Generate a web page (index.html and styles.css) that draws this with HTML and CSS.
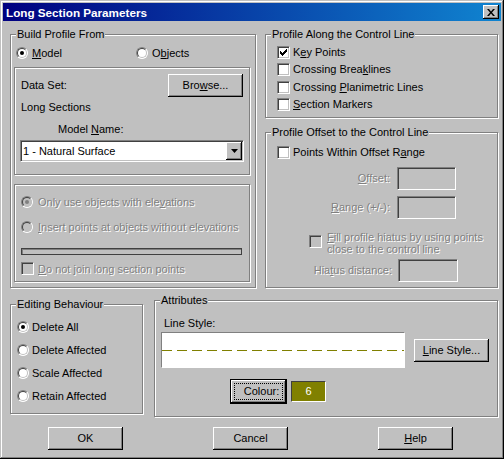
FILE: index.html
```html
<!DOCTYPE html>
<html>
<head>
<meta charset="utf-8">
<link rel="stylesheet" href="styles.css">
</head>
<body>
<div class="window">
  <div class="titlebar">
    <span class="title">Long Section Parameters</span>
    <span class="close"><svg width="8" height="7" viewBox="0 0 8 7"><path d="M0 0h2l2 2.5 2-2.5h2l-3 3.5 3 3.5h-2l-2-2.5-2 2.5h-2l3-3.5z" fill="#000"/></svg></span>
  </div>
  <div class="content">
    <div class="row-top">
      <div class="group g-build">
        <span class="caption">Build Profile From</span>
        <div class="radio-line">
          <div class="opt w-model"><span class="radio on"></span><span><u>M</u>odel</span></div>
          <div class="opt"><span class="radio"></span><span>O<u>b</u>jects</span></div>
        </div>
        <div class="box box-data">
          <div class="ds-row"><span>Data Set:</span><span class="btn">Bro<u>w</u>se...</span></div>
          <div class="ls">Long Sections</div>
          <div class="mn">Model <u>N</u>ame:</div>
          <div class="combo"><span class="combo-text">1 - Natural Surface</span><span class="drop"><svg width="7" height="4" viewBox="0 0 7 4"><path d="M0 0h7l-3.5 4z" fill="#000"/></svg></span></div>
        </div>
        <div class="box box-opts">
          <div class="dis-line r1"><span class="radio dis on"></span><span class="dis">Only use objects with ele<u>v</u>ations</span></div>
          <div class="dis-line r2"><span class="radio dis"></span><span class="dis"><u>I</u>nsert points at objects without elevations</span></div>
          <div class="bar"></div>
          <div class="dis-line r3"><span class="check dis"></span><span class="dis"><u>D</u>o not join long section points</span></div>
        </div>
      </div>
      <div class="col-right">
        <div class="group g-along">
          <span class="caption">Profile Along the Control Line</span>
          <div class="ck-list">
            <div class="ck-line"><span class="check"><svg width="11" height="11" viewBox="0 0 11 11" shape-rendering="crispEdges"><path d="M2 4h1v3h-1zM3 5h1v3h-1zM4 6h1v3h-1zM5 5h1v3h-1zM6 4h1v3h-1zM7 3h1v3h-1zM8 2h1v3h-1z" fill="#000"/></svg></span><span>K<u>e</u>y Points</span></div>
            <div class="ck-line"><span class="check"></span><span>Crossing Brea<u>k</u>lines</span></div>
            <div class="ck-line shift"><span class="check"></span><span>Crossing <u>P</u>lanimetric Lines</span></div>
            <div class="ck-line"><span class="check"></span><span><u>S</u>ection Markers</span></div>
          </div>
        </div>
        <div class="group g-offset">
          <span class="caption">Profile Offset to the Control Line</span>
          <div class="ck-line pw"><span class="check"></span><span>Points Within Offset R<u>a</u>nge</span></div>
          <div class="field-row fr-offset"><span class="dis"><u>O</u>ffset:</span><span class="field"></span></div>
          <div class="field-row fr-range"><span class="dis"><u>R</u>ange (+/-):</span><span class="field"></span></div>
          <div class="fill-row"><span class="check dis"></span><span class="dis fill-text"><u>F</u>ill profile hiatus by using points<br>close to the control line</span></div>
          <div class="field-row fr-hiatus"><span class="dis">Hia<u>t</u>us distance:</span><span class="field wide"></span></div>
        </div>
      </div>
    </div>
    <div class="row-bottom">
      <div class="group g-edit">
        <span class="caption">Editing Behaviour</span>
        <div class="edit-list">
          <div class="opt e"><span class="radio on"></span><span>Delete All</span></div>
          <div class="opt e"><span class="radio"></span><span>Delete Affected</span></div>
          <div class="opt e"><span class="radio"></span><span>Scale Affected</span></div>
          <div class="opt e"><span class="radio"></span><span>Retain Affected</span></div>
        </div>
      </div>
      <div class="group g-attr">
        <span class="caption">Attributes</span>
        <div class="ls-label">Line Style:</div>
        <div class="line-row">
          <div class="line-box"><svg width="242" height="1" viewBox="0 0 242 1" shape-rendering="crispEdges"><line x1="0" y1="0.5" x2="242" y2="0.5" stroke="#808000" stroke-width="1" stroke-dasharray="10 5"/></svg></div>
          <span class="btn"><u>L</u>ine Style...</span>
        </div>
        <div class="colour-row">
          <span class="btn btn-default">Colour:</span>
          <span class="swatch">6</span>
        </div>
      </div>
    </div>
    <div class="buttons">
      <span class="btn">OK</span>
      <span class="btn">Cancel</span>
      <span class="btn"><u>H</u>elp</span>
    </div>
  </div>
</div>
</body>
</html>
```
FILE: styles.css
```css
html, body {
  margin: 0;
  background: #c0c0c0;
}
body {
  font: 11px/13px "Liberation Sans", Arial, sans-serif;
  color: #000;
}
u { text-underline-offset: 1px; }

.window {
  width: 504px;
  height: 459px;
  box-sizing: border-box;
  padding: 3px;
  background: #c0c0c0;
  box-shadow: inset -1px -1px #000, inset 1px 1px #c0c0c0, inset -2px -2px #808080, inset 2px 2px #fff;
}

.titlebar {
  height: 18px;
  background: linear-gradient(to right, #000080, #1084d0);
  display: flex;
  align-items: center;
  justify-content: space-between;
  padding: 0 2px 0 3px;
}
.title {
  color: #fff;
  font-weight: bold;
  font-size: 11.7px;
}
.close {
  width: 16px;
  height: 14px;
  box-sizing: border-box;
  background: #c0c0c0;
  box-shadow: inset -1px -1px #000, inset 1px 1px #fff, inset -2px -2px #808080;
  display: flex;
  align-items: center;
  justify-content: center;
}
.close svg { display: block; }

.content {
  padding: 13px 0 0 7px;
}

/* group boxes */
.group, .box {
  position: relative;
  box-sizing: border-box;
  border: 1px solid #808080;
  box-shadow: inset 1px 1px #fff, 1px 1px #fff;
}
.caption {
  position: absolute;
  top: -7px;
  left: 5px;
  padding: 0 1px;
  background: #c0c0c0;
  line-height: 13px;
  white-space: nowrap;
}

.row-top {
  display: flex;
  gap: 9px;
  align-items: flex-start;
}
.g-build {
  width: 246px;
  height: 254px;
  padding-left: 3px;
}
.col-right {
  display: flex;
  flex-direction: column;
  gap: 14px;
  width: 233px;
}
.g-along { height: 84px; }
.g-offset { height: 156px; }

.row-bottom {
  display: flex;
  gap: 11px;
  margin-top: 12px;
  align-items: flex-start;
}
.g-edit {
  width: 133px;
  height: 110px;
  margin-top: 4px;
}
.g-attr {
  width: 344px;
  height: 117px;
}

.buttons {
  display: flex;
  gap: 90px;
  margin-top: 10px;
  padding-left: 38px;
}

/* controls */
.btn {
  position: relative;
  flex: none;
  width: 75px;
  height: 23px;
  box-sizing: border-box;
  background: #c0c0c0;
  box-shadow: inset -1px -1px #000, inset 1px 1px #fff, inset -2px -2px #808080;
  display: flex;
  align-items: center;
  justify-content: center;
  white-space: nowrap;
}
.btn-default {
  width: 57px;
  height: 25px;
  border: 1px solid #000;
  padding-left: 6px;
}
.btn-default::after {
  content: "";
  position: absolute;
  left: 3px;
  top: 3px;
  right: 3px;
  bottom: 3px;
  border: 1px dotted #000;
}

.radio {
  position: relative;
  flex: none;
  width: 12px;
  height: 12px;
  box-sizing: border-box;
  border-radius: 50%;
  border: 1px solid;
  border-color: #808080 #fff #fff #808080;
  background: #fff;
}
.radio::before {
  content: "";
  position: absolute;
  inset: 0;
  border-radius: 50%;
  border: 1px solid;
  border-color: #404040 #c0c0c0 #c0c0c0 #404040;
}
.radio.on::after {
  content: "";
  position: absolute;
  left: 3px;
  top: 3px;
  width: 4px;
  height: 4px;
  border-radius: 50%;
  background: #000;
}
.radio.dis { background: #c0c0c0; }
.radio.dis.on::after { background: #808080; }

.check {
  position: relative;
  flex: none;
  width: 13px;
  height: 13px;
  box-sizing: border-box;
  border: 1px solid;
  border-color: #808080 #fff #fff #808080;
  box-shadow: inset 1px 1px #404040, inset -1px -1px #c0c0c0;
  background: #fff;
}
.check svg { display: block; }
.check.dis { background: #c0c0c0; }

.dis {
  color: #808080;
  text-shadow: 1px 1px 0 #fff;
}

.field {
  flex: none;
  width: 59px;
  height: 23px;
  box-sizing: border-box;
  border: 1px solid;
  border-color: #808080 #fff #fff #808080;
  box-shadow: inset 1px 1px #404040;
  background: #c0c0c0;
}
.field.wide { width: 60px; }

/* build profile group */
.radio-line {
  display: flex;
  align-items: center;
  height: 12px;
  margin-top: 12px;
  padding-left: 2px;
}
.opt {
  display: flex;
  align-items: center;
  gap: 4px;
  white-space: nowrap;
}
.w-model { width: 120px; }

.box-data {
  width: 236px;
  height: 108px;
  margin-top: 8px;
}
.ds-row {
  display: flex;
  justify-content: space-between;
  align-items: center;
  margin: 6px 6px 0 6px;
}
.ls { margin: 4px 0 0 6px; }
.mn { margin: 9px 0 0 43px; }
.combo {
  width: 224px;
  height: 22px;
  margin: 4px 0 0 5px;
  box-sizing: border-box;
  border: 1px solid;
  border-color: #808080 #fff #fff #808080;
  box-shadow: inset 1px 1px #404040, inset -1px -1px #c0c0c0;
  background: #fff;
  padding: 1px;
  display: flex;
  align-items: center;
  justify-content: space-between;
}
.combo-text { padding-left: 1px; }
.drop {
  width: 16px;
  height: 18px;
  box-sizing: border-box;
  background: #c0c0c0;
  box-shadow: inset -1px -1px #000, inset 1px 1px #fff, inset -2px -2px #808080;
  display: flex;
  align-items: center;
  justify-content: center;
}
.drop svg { display: block; }

.box-opts {
  width: 236px;
  height: 98px;
  margin-top: 9px;
  padding-left: 6px;
}
.dis-line {
  display: flex;
  align-items: center;
  gap: 5px;
  height: 12px;
  line-height: 12px;
  white-space: nowrap;
}
.dis-line.r1 { margin-top: 11px; }
.dis-line.r2 { margin-top: 13px; }
.dis-line.r3 { margin-top: 7px; height: 13px; gap: 4px; }
.bar {
  width: 221px;
  height: 7px;
  margin-top: 15px;
  box-sizing: border-box;
  border: 1px solid #404040;
  box-shadow: inset 1px 1px #808080;
  background: #c0c0c0;
}

/* right groups */
.ck-list {
  display: flex;
  flex-direction: column;
  gap: 4px;
  margin-top: 11px;
  padding-left: 11px;
}
.ck-line {
  display: flex;
  align-items: center;
  gap: 3px;
  height: 13px;
  white-space: nowrap;
}
.ck-line.shift { margin-top: 1px; }
.pw {
  margin-top: 13px;
  padding-left: 11px;
}
.field-row {
  display: flex;
  justify-content: flex-end;
  align-items: center;
  gap: 7px;
  padding-right: 41px;
}
.fr-offset { margin-top: 8px; }
.fr-range { margin-top: 6px; }
.fr-hiatus { margin-top: 4px; gap: 6px; padding-right: 39px; }
.fill-row {
  display: flex;
  align-items: flex-start;
  gap: 5px;
  margin-top: 12px;
  padding-left: 43px;
  line-height: 12px;
}
.fill-row .check { margin-top: 4px; }

/* editing behaviour */
.edit-list {
  display: flex;
  flex-direction: column;
  gap: 11px;
  margin-top: 16px;
  padding-left: 6px;
}
.opt.e {
  height: 12px;
  gap: 3px;
}

/* attributes */
.ls-label {
  margin: 16px 0 0 9px;
}
.line-row {
  display: flex;
  align-items: center;
  gap: 9px;
  margin-top: 2px;
  padding-left: 6px;
}
.line-box {
  width: 244px;
  height: 36px;
  box-sizing: border-box;
  border: 1px solid;
  border-color: #808080 #fff #fff #808080;
  background: #fff;
  display: flex;
  align-items: center;
}
.line-box svg { display: block; }
.colour-row {
  display: flex;
  align-items: center;
  gap: 4px;
  margin-top: 11px;
  padding-left: 75px;
}
.swatch {
  width: 35px;
  height: 21px;
  box-sizing: border-box;
  border: 1px solid;
  border-color: #404040 #fff #fff #404040;
  background: #808000;
  color: #fff;
  display: flex;
  align-items: center;
  justify-content: center;
}
```
